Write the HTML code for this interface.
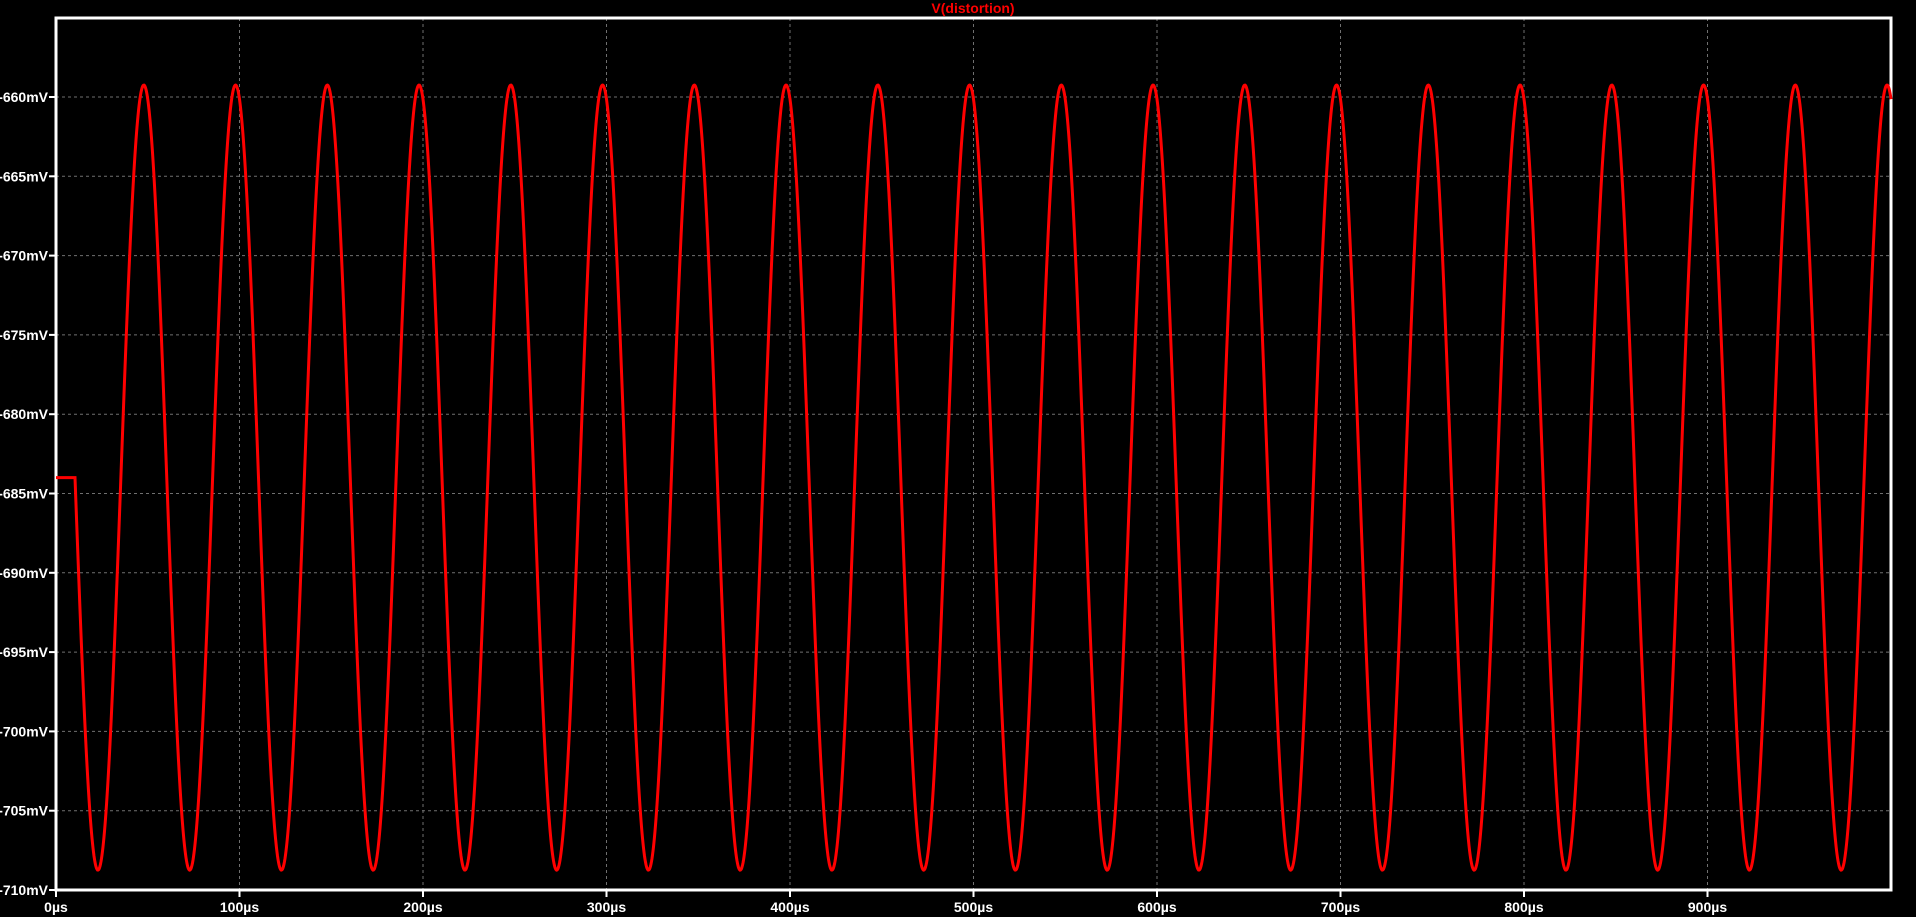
<!DOCTYPE html>
<html><head><meta charset="utf-8"><style>
html,body{margin:0;padding:0;background:#000;width:1916px;height:917px;overflow:hidden}
svg{display:block}
text{font-family:"Liberation Sans",sans-serif;font-weight:bold;font-size:14px}
</style></head><body>
<svg id="s" width="1916" height="917" xmlns="http://www.w3.org/2000/svg">
<text x="973" y="13" fill="#ff0000" text-anchor="middle" font-size="13">V(distortion)</text>
</svg>
<script>
var s=document.getElementById('s'),h='';
var L=56,R=1891,T=18,B=890,x0=56,dx=183.5,y0=97,dy=79.3;
for(var i=1;i<=9;i++){var x=x0+i*dx;h+='<line x1="'+x+'" y1="'+T+'" x2="'+x+'" y2="'+B+'" stroke="#707070" stroke-width="1" stroke-dasharray="3,3"/>';}
for(var i=0;i<10;i++){var y=y0+i*dy;h+='<line x1="'+L+'" y1="'+y+'" x2="'+R+'" y2="'+y+'" stroke="#707070" stroke-width="1" stroke-dasharray="3,3"/>';}
for(var i=0;i<=10;i++){var y=y0+i*dy;h+='<line x1="49" y1="'+y+'" x2="'+L+'" y2="'+y+'" stroke="#fff" stroke-width="2"/>';
h+='<text x="48" y="'+(y+5)+'" fill="#fff" text-anchor="end">-'+(660+5*i)+'mV</text>';}
for(var i=0;i<=9;i++){var x=x0+i*dx;h+='<line x1="'+x+'" y1="'+B+'" x2="'+x+'" y2="897" stroke="#fff" stroke-width="2"/>';
h+='<text x="'+x+'" y="912" fill="#fff" text-anchor="middle">'+(i*100)+'µs</text>';}
h+='<rect x="'+L+'" y="'+T+'" width="'+(R-L)+'" height="'+(B-T)+'" fill="none" stroke="#fff" stroke-width="3"/>';
var yc=477.6,A=396.5*0.99,P=91.75,ts=75,d='M'+L+' '+yc+' L'+ts+' '+yc;
for(var x=ts;x<=R;x+=0.5){d+=' L'+x.toFixed(1)+' '+(yc+A*Math.sin(2*Math.PI*(x-ts)/P)).toFixed(1);}
h+='<path d="'+d+'" fill="none" stroke="#ff0000" stroke-width="3"/>';
s.insertAdjacentHTML('beforeend',h);
</script>
</body></html>
